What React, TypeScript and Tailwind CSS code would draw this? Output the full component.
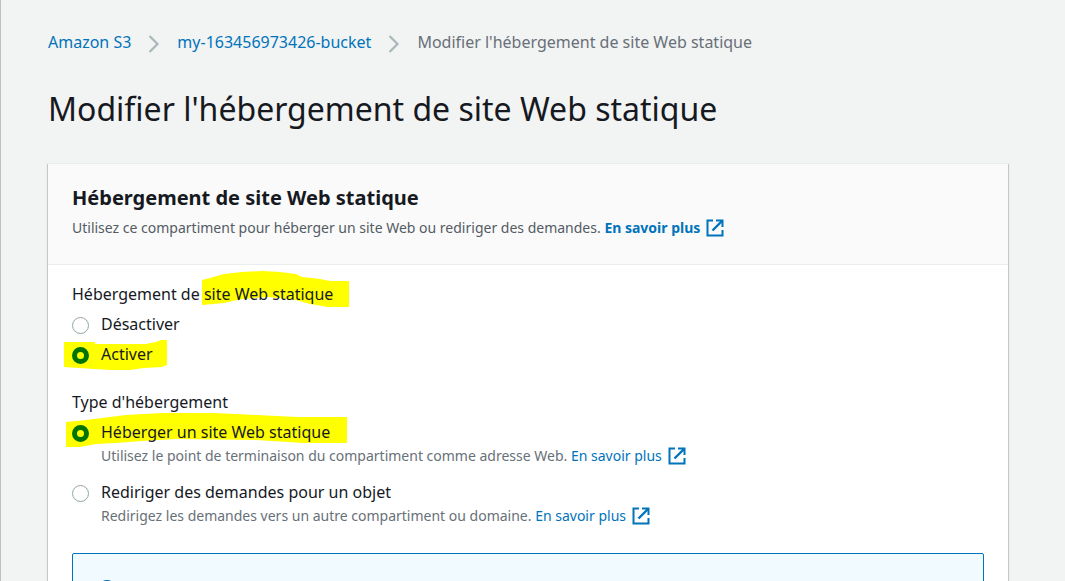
import { ReactNode } from "react";

const highlight = "#ffff00";

function Chevron() {
  return (
    <svg className="mx-[17px] mt-1 h-5 w-3 shrink-0" viewBox="0 0 12 20" fill="none" aria-hidden="true">
      <path d="M1.5 2 L9.5 10 L1.5 18" stroke="#aab7b8" strokeWidth="2.2" />
    </svg>
  );
}

function ExternalLink({ bold, children }: { bold?: boolean; children: ReactNode }) {
  return (
    <a href="#" className={`inline-flex items-center gap-1.5 text-[#0073bb] ${bold ? "font-bold" : ""}`}>
      {children}
      <svg className="size-[18px]" viewBox="0 0 18 18" fill="none" stroke="currentColor" strokeWidth="2" aria-hidden="true">
        <path d="M7 1.5H1.5V16.5H16.5V11" />
        <path d="M10 1.5H16.5V8" />
        <path d="M16 2L6.5 11.5" strokeWidth="2.4" />
      </svg>
    </a>
  );
}

function Option({
  id,
  name,
  label,
  checked,
  marker,
  children,
}: {
  id: string;
  name: string;
  label: string;
  checked?: boolean;
  marker?: ReactNode;
  children?: ReactNode;
}) {
  return (
    <div className="relative">
      {marker}
      <div className="relative flex gap-3">
        <input
          id={id}
          name={name}
          type="radio"
          defaultChecked={checked}
          className="mt-[5px] size-[17px] shrink-0 appearance-none rounded-full border border-[#95a5a6] bg-white checked:border-[5px] checked:border-[#007300] checked:bg-[#ffff00]"
        />
        <div>
          <label htmlFor={id} className="block text-base/6">
            {label}
          </label>
          {children && <p className="text-sm/6 text-[#687078]">{children}</p>}
        </div>
      </div>
    </div>
  );
}

export default function App() {
  return (
    <div className="h-screen overflow-hidden border-l border-[#b9c0c4] bg-[#f2f3f3] pr-[57px] pl-[47px] font-['Noto_Sans',sans-serif] text-[#16191f]">
      <nav aria-label="Breadcrumb" className="flex items-center pt-[30px] text-base/6">
        <a href="#" className="text-[#0073bb]">Amazon S3</a>
        <Chevron />
        <a href="#" className="text-[#0073bb]">my-163456973426-bucket</a>
        <Chevron />
        <span className="text-[#687078]">Modifier l'hébergement de site Web statique</span>
      </nav>

      <h1 className="pt-[33px] text-[32px]/[44px]">Modifier l'hébergement de site Web statique</h1>

      <main className="mt-8 border-t border-[#eaeded] bg-white shadow-[0_1px_1px_0_rgba(0,28,36,0.3),1px_1px_1px_0_rgba(0,28,36,0.15),-1px_1px_1px_0_rgba(0,28,36,0.15)]">
        <header className="border-b border-[#eaeded] bg-[#fafafa] px-6 pt-5 pb-6">
          <h2 className="text-xl/7 font-bold">Hébergement de site Web statique</h2>
          <p className="pt-1 text-sm/6 text-[#545b64]">
            Utilisez ce compartiment pour héberger un site Web ou rediriger des demandes.{" "}
            <ExternalLink bold>En savoir plus</ExternalLink>
          </p>
        </header>

        <div className="px-6 pt-[17px]">
          <fieldset>
            <legend className="relative text-base/6">
              <svg className="absolute -top-[11px] left-[130px] h-9 w-[147px]" viewBox="0 0 147 36" aria-hidden="true">
                <path
                  fill={highlight}
                  d="M0 9L8 7L22 3L40 1L60 0L78 1L94 3L100 6L118 8L128 10H147V36H126L108 33L94 29L66 26L40 28L22 32L0 34Z"
                />
              </svg>
              <span className="relative">Hébergement de site Web statique</span>
            </legend>
            <div className="flex flex-col gap-1.5 pt-1.5">
              <Option id="disable" name="hosting" label="Désactiver" />
              <Option
                id="enable"
                name="hosting"
                label="Activer"
                checked
                marker={
                  <svg className="absolute -top-[3px] -left-2 h-8 w-[103px]" viewBox="0 0 103 32" aria-hidden="true">
                    <path fill={highlight} d="M0 3H31V5H82L92 3L97 1H103V26L98 28L80 29L66 31H48L30 30L0 28Z" />
                  </svg>
                }
              />
            </div>
          </fieldset>

          <fieldset className="mt-6">
            <legend className="text-base/6">Type d'hébergement</legend>
            <div className="flex flex-col gap-3 pt-1.5">
              <Option
                id="host"
                name="type"
                label="Héberger un site Web statique"
                checked
                marker={
                  <svg className="absolute -top-[7px] -left-1.5 h-9 w-[281px]" viewBox="0 0 281 36" aria-hidden="true">
                    <path
                      fill={highlight}
                      d="M0 9L20 7L36 5L60 2L96 0H148L190 2L232 4H281V30H238L190 27L110 26L76 28L50 30L30 31L14 34H0Z"
                    />
                  </svg>
                }
              >
                Utilisez le point de terminaison du compartiment comme adresse Web.{" "}
                <ExternalLink>En savoir plus</ExternalLink>
              </Option>
              <Option id="redirect" name="type" label="Rediriger des demandes pour un objet">
                Redirigez les demandes vers un autre compartiment ou domaine.{" "}
                <ExternalLink>En savoir plus</ExternalLink>
              </Option>
            </div>
          </fieldset>

          <div className="mt-[25px] h-40 rounded-xs border border-[#0073bb] bg-[#f1faff] px-6 pt-[26px]">
            <svg className="size-5" viewBox="0 0 20 20" fill="none" stroke="#0073bb" strokeWidth="2" aria-hidden="true">
              <circle cx="10" cy="9" r="8" />
              <path d="M10 8V13M10 5V7" />
            </svg>
          </div>
        </div>
      </main>
    </div>
  );
}
